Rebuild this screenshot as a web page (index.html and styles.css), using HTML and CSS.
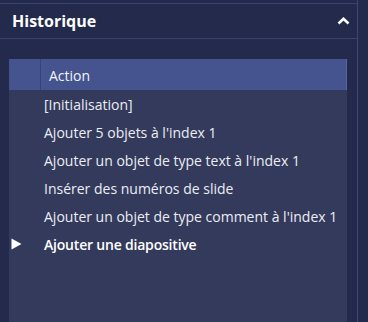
FILE: index.html
```html
<!DOCTYPE html>
<html lang="fr">
<head>
<meta charset="utf-8">
<link rel="stylesheet" href="styles.css">
</head>
<body>
<div class="page">
  <div class="panel">
    <div class="header">
      <span class="title">Historique</span>
      <svg class="chevron" width="13" height="8" viewBox="0 0 13 8"><path d="M1.5 6.5 L6.5 1.8 L11.5 6.5" fill="none" stroke="#ffffff" stroke-width="2.6" stroke-linejoin="miter"/></svg>
    </div>
    <div class="content">
      <div class="table">
        <div class="thead">
          <div class="th-mark"></div>
          <div class="th-action">Action</div>
        </div>
        <div class="tbody">
          <div class="row"><div class="mark"></div><div class="cell">[Initialisation]</div></div>
          <div class="row"><div class="mark"></div><div class="cell">Ajouter 5 objets à l'index 1</div></div>
          <div class="row"><div class="mark"></div><div class="cell">Ajouter un objet de type text à l'index 1</div></div>
          <div class="row"><div class="mark"></div><div class="cell">Insérer des numéros de slide</div></div>
          <div class="row"><div class="mark"></div><div class="cell">Ajouter un objet de type comment à l'index 1</div></div>
          <div class="row current"><div class="mark"><svg width="11" height="12" viewBox="0 0 11 12"><polygon points="0.5,0.5 10.5,6 0.5,11.5" fill="#ffffff"/></svg></div><div class="cell">Ajouter une diapositive</div></div>
        </div>
      </div>
    </div>
  </div>
</div>
</body>
</html>
```
FILE: styles.css
```css
html, body {
  margin: 0;
  padding: 0;
  background: #232a4b;
}
body {
  width: 368px;
  height: 322px;
  overflow: hidden;
  font-family: "Open Sans", "Noto Sans", sans-serif;
}
.page {
  display: flex;
  height: 322px;
}
.panel {
  width: 358px;
  border-right: 1px solid #3b4678;
  display: flex;
  flex-direction: column;
  height: 322px;
  box-sizing: border-box;
  padding-top: 3px;
}
.header {
  border-top: 1px solid #38436f;
  border-bottom: 1px solid #38436f;
  height: 34px;
  display: flex;
  align-items: center;
  justify-content: space-between;
  padding: 0 7px 0 12px;
}
.title {
  color: #ffffff;
  font-weight: 700;
  font-size: 16px;
  margin-top: -1px;
}
.chevron {
  display: block;
  margin-top: -1px;
}
.content {
  flex: 1;
  display: flex;
  padding: 20px 10px 0 9px;
  min-height: 0;
}
.table {
  flex: 1;
  display: flex;
  flex-direction: column;
}
.thead {
  display: grid;
  grid-template-columns: 32px 1fr;
  height: 31px;
  background: #45538e;
  border-right: 1px solid #5565a6;
}
.th-mark {
  border-right: 1px solid #37437a;
}
.th-action {
  color: #f2f3f8;
  font-size: 14px;
  display: flex;
  align-items: center;
  padding-left: 8px;
  padding-top: 2px;
}
.tbody {
  flex: 1;
  background: #333a5c;
}
.row {
  display: grid;
  grid-template-columns: 32px 1fr;
  height: 28px;
  align-items: center;
}
.cell {
  color: #eceef4;
  font-size: 14px;
  padding-left: 3px;
  white-space: nowrap;
}
.mark {
  display: flex;
  align-items: center;
  padding-left: 2px;
}
.mark svg {
  display: block;
}
.current .cell {
  font-weight: 600;
  color: #ffffff;
  letter-spacing: -0.2px;
}
```
